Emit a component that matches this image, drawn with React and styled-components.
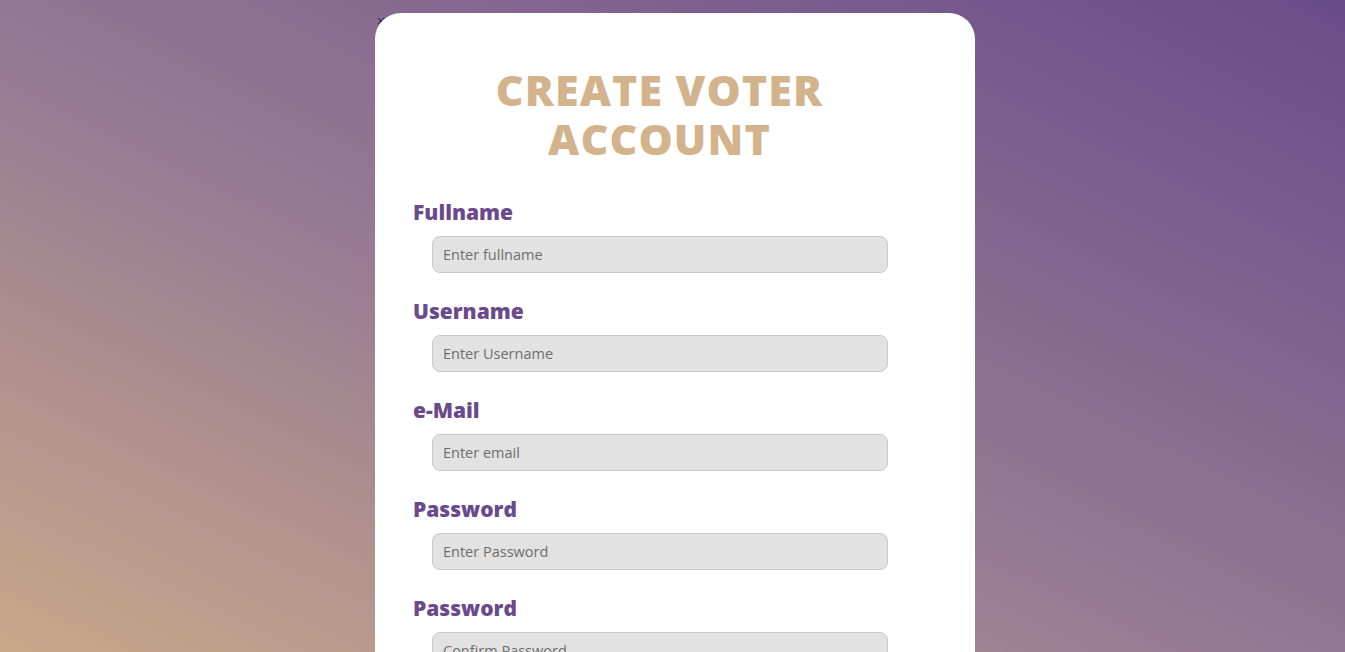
import React from 'react';
import styled, { createGlobalStyle } from 'styled-components';

const GlobalStyle = createGlobalStyle`
  html {
    background: linear-gradient(to top right, #c8a889 0%, #977a93 45%, #6a4b8a 100%) fixed;
    min-height: 100%;
  }
  body {
    margin: 0;
    font-family: "Open Sans", "DejaVu Sans", sans-serif;
  }
`;

const fields = [
  { label: 'Fullname', placeholder: 'Enter fullname', type: 'text' },
  { label: 'Username', placeholder: 'Enter Username', type: 'text' },
  { label: 'e-Mail', placeholder: 'Enter email', type: 'email' },
  { label: 'Password', placeholder: 'Enter Password', type: 'password' },
  { label: 'Password', placeholder: 'Confirm Password', type: 'password' },
];

const App = () => {
  return (
    <>
      <GlobalStyle />
      <Page>
        <Holder>
          <Close>×</Close>
          <Card>
            <Title>CREATE VOTER<br />ACCOUNT</Title>
            <Form onSubmit={(e) => e.preventDefault()}>
              {fields.map((f, i) => (
                <Group key={i}>
                  <Label>{f.label}</Label>
                  <Input type={f.type} placeholder={f.placeholder} />
                </Group>
              ))}
              <Submit type="submit">Register</Submit>
            </Form>
          </Card>
        </Holder>
      </Page>
    </>
  );
};

const Page = styled.div`
  display: flex;
  justify-content: center;
  padding: 13px 0 40px 5px;
`

const Holder = styled.div`
  position: relative;
`

const Close = styled.span`
  position: absolute;
  left: 1px;
  top: 2px;
  font-family: "DejaVu Sans", sans-serif;
  font-size: 12px;
  line-height: 12px;
  color: #1d2a6b;
  z-index: 0;
`

const Card = styled.div`
  position: relative;
  z-index: 1;
  width: 600px;
  box-sizing: border-box;
  background: #ffffff;
  border-radius: 26px;
  padding: 52px 69px 40px 38px;
`

const Title = styled.h1`
  margin: 0 0 36px;
  text-align: center;
  font-family: "Open Sans", "DejaVu Sans", sans-serif;
  font-weight: 800;
  font-size: 43px;
  line-height: 49px;
  letter-spacing: 1.1px;
  color: #d3b38c;
`

const Form = styled.form`
  display: flex;
  flex-direction: column;
  gap: 25px;
`

const Group = styled.div`
  display: flex;
  flex-direction: column;
  gap: 11px;
`

const Label = styled.label`
  font-family: "Open Sans", "DejaVu Sans", sans-serif;
  font-weight: 800;
  font-size: 21px;
  line-height: 26px;
  color: #6a4a8c;
`

const Input = styled.input`
  margin-left: 19px;
  width: 456px;
  height: 37px;
  box-sizing: border-box;
  padding: 0 10px;
  border: 1px solid #c9c9c9;
  border-radius: 8px;
  background: #e2e2e2;
  font-family: "Open Sans", "DejaVu Sans", sans-serif;
  font-size: 14.5px;
  color: #333;
  outline: none;

  &::placeholder {
    color: #6e6e6e;
  }
`

const Submit = styled.button`
  margin: 10px 0 0 19px;
  width: 456px;
  height: 40px;
  border: none;
  border-radius: 8px;
  background: #6a4a8c;
  color: #fff;
  font-family: "Open Sans", sans-serif;
  font-weight: 700;
  font-size: 16px;
`

export default App;
